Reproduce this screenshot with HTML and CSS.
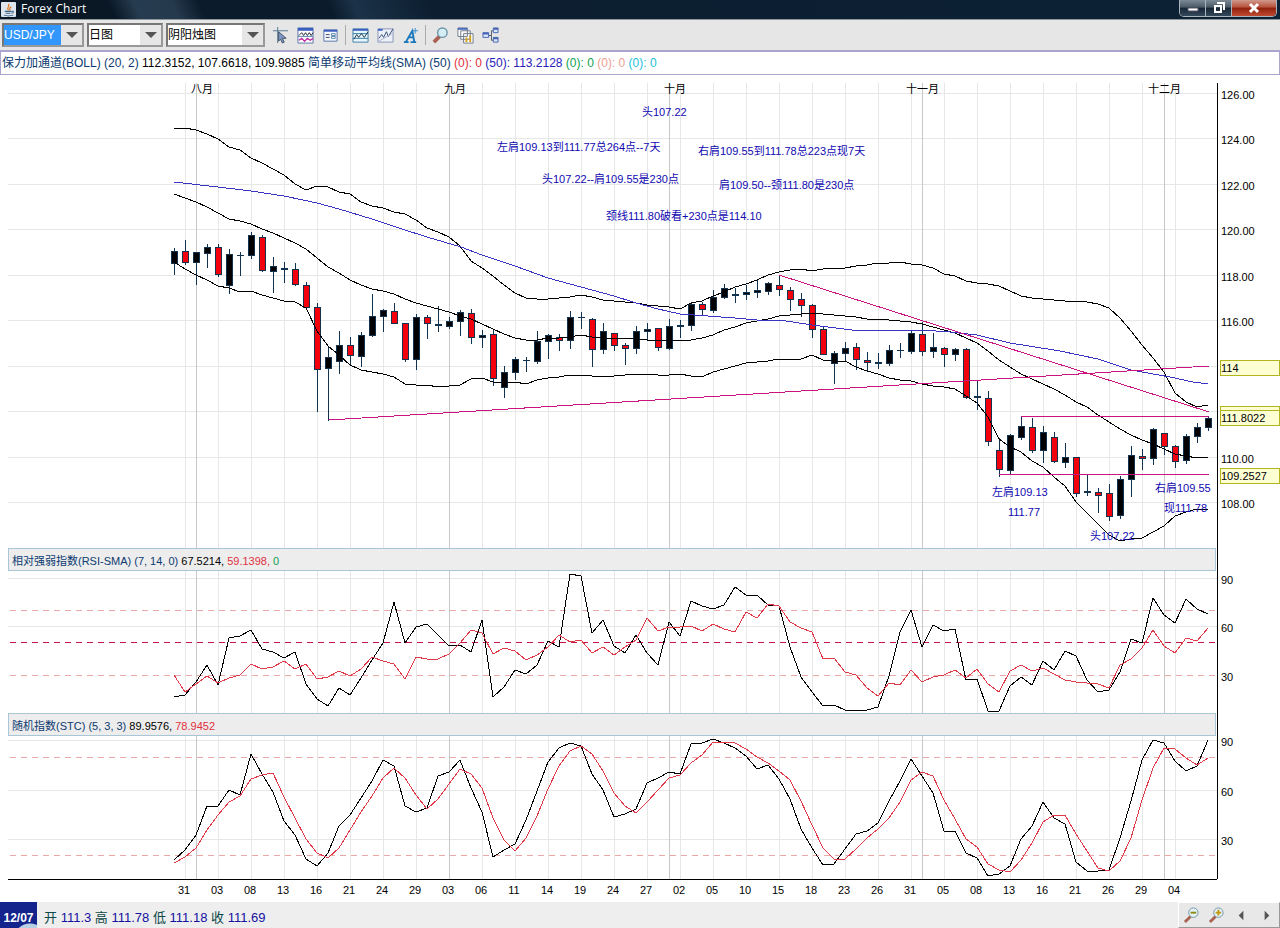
FILE: index.html
```html
<!DOCTYPE html>
<html lang="zh-CN">
<head>
    <meta charset="UTF-8">
    <meta name="viewport" content="width=device-width, initial-scale=1.0">
    <title>Forex Chart</title>
    <link rel="stylesheet" href="styles.css">
</head>
<body>

<header class="titlebar">
    <svg class="logo" viewBox="0 0 16 16">
        <rect width="16" height="16" rx="1" fill="#dfe7ee"/>
        <path d="M8 9C5 6 10 5 8 2M10 9C8 7 10 6 11 5" fill="none" stroke="#e07818" stroke-width="1.3"/>
        <path d="M4 10h7M5 12h5M3 14c3 1 7 1 10 0M11 10c3-1 3 2 0 2" fill="none" stroke="#3d6488" stroke-width="1.1"/>
    </svg>
    <h1>Forex Chart</h1>
    <div class="window-buttons">
        <button class="win" aria-label="最小化"><svg viewBox="0 0 12 12"><path d="M1 6h10v3H1z" fill="#fff" stroke="#556"/></svg></button>
        <button class="win" aria-label="还原"><svg viewBox="0 0 12 12"><path d="M4 1h7v7M2 4h6v6H2z" fill="none" stroke="#fff" stroke-width="2"/></svg></button>
        <button class="win close" aria-label="关闭"><svg viewBox="0 0 12 12"><path d="M2 2l8 8M10 2l-8 8" stroke="#fff" stroke-width="3"/></svg></button>
    </div>
</header>

<nav class="toolbar">
    <span class="combo pair">
        <select aria-label="货币对"><option>USD/JPY</option><option>EUR/USD</option></select>
    </span>
    <span class="combo period">
        <select aria-label="周期"><option>日图</option><option>周图</option></select>
    </span>
    <span class="combo style">
        <select aria-label="图表类型"><option>阴阳烛图</option><option>线图</option></select>
    </span>
    <button class="tool" aria-label="光标"><svg viewBox="0 0 18 18"><path d="M1 4h16M6 0v17" stroke="#52778f"/><path d="M7 5l8 7-4 0 2 4-2 1-2-4-2 2z" fill="#7d95c4" stroke="#456"/></svg></button>
    <button class="tool" aria-label="指标"><svg viewBox="0 0 18 18"><path d="M1 1h16v16H1z" fill="#fff" stroke="#5873a8"/><path d="M1 1h16v3H1z" fill="#3b5fc0"/><path d="M2 9l3-3 2 3 2-3 2 3 2-3 2 3 2-3" fill="none" stroke="#223"/><path d="M1 10h16" stroke="#58a"/><path d="M2 14l3-2 3 3 3-3 3 2 3-2" fill="none" stroke="#c42aa0" stroke-width="1.5"/></svg></button>
    <button class="tool" aria-label="数据"><svg viewBox="0 0 18 18"><path d="M2 3h14v12H2z" fill="#f4f6fc" stroke="#5873a8"/><path d="M2 3h14v2H2z" fill="#3b5fc0"/><path d="M4 8h4M4 11h4" stroke="#346"/><path d="M10 7h4v2h-4zM10 10h4v2h-4z" fill="#fff" stroke="#58a"/></svg></button>
    <span class="separator"></span>
    <button class="tool" aria-label="趋势线"><svg viewBox="0 0 18 18"><path d="M1 2h16v14H1z" fill="#e8f5fb" stroke="#3f7fa8"/><path d="M1 2h16v2H1z" fill="#3b5fc0"/><path d="M1 7h16M1 12h16" stroke="#2a7d9c"/><path d="M2 13l3-5 2 3 3-4 3 4 4-6" fill="none" stroke="#234"/></svg></button>
    <button class="tool" aria-label="折线"><svg viewBox="0 0 18 18"><path d="M1 2h16v14H1z" fill="#edf0f7" stroke="#8794b8"/><path d="M1 2h5v2H1z" fill="#4067c8"/><path d="M2 12l3-4 2 3 3-6 2 5 5-8" fill="none" stroke="#334a7c"/><path d="M2 15L16 7" stroke="#aab3cc"/></svg></button>
    <button class="tool" aria-label="文字"><svg viewBox="0 0 18 18"><path d="M2 16h5M9 16h6M4 16L11 4l2 12M6 11h6" fill="none" stroke="#1978bd" stroke-width="2"/><path d="M14 1v6M11 4h6" stroke="#3a91cc"/></svg></button>
    <span class="separator"></span>
    <button class="tool" aria-label="放大"><svg viewBox="0 0 18 18"><path d="M2 16l6-6" stroke="#a96250" stroke-width="4"/><circle cx="11" cy="6" r="5" fill="#d5eef5" stroke="#6c95a8" stroke-width="1.5"/></svg></button>
    <button class="tool" aria-label="新窗口"><svg viewBox="0 0 18 18"><path d="M1 1h10v9H1zM4 4h10v9H4zM7 7h10v10H7z" fill="#fff" stroke="#6d7888"/><path d="M1 1h10v2H1z" fill="#4a6fc0"/><path d="M10 11v5M14 9v7" stroke="#d3a11c" stroke-width="2"/></svg></button>
    <button class="tool" aria-label="连接"><svg viewBox="0 0 18 18"><path d="M7 9h3V4h2M10 9v5h2" fill="none" stroke="#456"/><path d="M1 6h6v5H1zM12 1h5v5h-5zM12 11h5v5h-5z" fill="#dce6fb" stroke="#4664b4"/><path d="M1 6h6v2H1zM12 1h5v2h-5zM12 11h5v2h-5z" fill="#4664b4"/></svg></button>
</nav>

<div class="legend">
    保力加通道(BOLL) (20, 2) <b>112.3152, 107.6618, 109.9885</b> 简单移动平均线(SMA) (50)
    <span class="red">(0): 0</span> <span class="blue">(50): 113.2128</span> <span class="green">(0): 0</span>
    <span class="salmon">(0): 0</span> <span class="cyan">(0): 0</span>
</div>

<main>
    <svg class="pane" id="price" viewBox="0 75 1280 473"></svg>
    <div class="pane-head">
        <h2>相对强弱指数(RSI-SMA) (7, 14, 0) <b>67.5214,</b> <span class="red">59.1398,</span> <span class="green">0</span></h2>
        <i></i>
    </div>
    <svg class="pane" id="rsi" viewBox="0 571 1280 142"></svg>
    <div class="pane-head">
        <h2>随机指数(STC) (5, 3, 3) <b>89.9576,</b> <span class="red">78.9452</span></h2>
        <i></i>
    </div>
    <svg class="pane" id="stc" viewBox="0 736 1280 166"></svg>
</main>

<footer class="statusbar">
    <span class="date">12/07</span>
    <p>开 <b>111.3</b> 高 <b>111.78</b> 低 <b>111.18</b> 收 <b>111.69</b></p>
    <div class="nav">
        <button class="tool" aria-label="缩小"><svg viewBox="0 0 18 18"><path d="M2 16l6-6" stroke="#a96250" stroke-width="3"/><circle cx="11" cy="6" r="5" fill="#e3f1f4" stroke="#7394a8"/><path d="M8 6h6" stroke="#8a8a10" stroke-width="2"/></svg></button>
        <button class="tool" aria-label="放大"><svg viewBox="0 0 18 18"><path d="M2 16l6-6" stroke="#a96250" stroke-width="3"/><circle cx="11" cy="6" r="5" fill="#e3f1f4" stroke="#7394a8"/><path d="M8 6h6M11 3v6" stroke="#c29a10" stroke-width="2"/></svg></button>
        <button class="tool" aria-label="向左"><svg viewBox="0 0 18 18"><path d="M11 4v10L6 9z" fill="#555"/></svg></button>
        <button class="tool" aria-label="向右"><svg viewBox="0 0 18 18"><path d="M7 4v10l5-5z" fill="#555"/></svg></button>
    </div>
</footer>

<script src="chart.js"></script>
</body>
</html>
```
FILE: styles.css
```css
* {
    box-sizing: border-box;
}

body {
    margin: 0;
    background: #fff;
    font-family: "Liberation Sans", "Noto Sans CJK SC", sans-serif;
    font-size: 12px;
    color: #000;
}

h1, h2, p {
    margin: 0;
    font-weight: normal;
}

b {
    font-weight: normal;
    color: #000;
}

button {
    padding: 0;
    border: 0;
    background: none;
}

/* title bar */
.titlebar {
    display: flex;
    align-items: flex-start;
    height: 20px;
    padding-left: 1px;
    border-bottom: 1px solid #8d979c;
    background: linear-gradient(65deg, #0a1826 9%, #263c50 11%, #25394c 14%, #0b1b2c 16%, #0b1b2c 26%, #1b3248 28%, #0c1e30 34%, #0d2236 100%);
}

.logo {
    width: 15px;
    height: 15px;
    margin-top: 2px;
}

.titlebar h1 {
    flex: 1;
    margin-left: 5px;
    font: 12px/18px "Open Sans", "Noto Sans", sans-serif;
    color: #fff;
}

.window-buttons {
    display: flex;
    height: 17px;
    margin-right: 3px;
    border: 1px solid #a9b3bb;
    border-top: 0;
    border-radius: 0 0 5px 5px;
    overflow: hidden;
}

.win {
    display: flex;
    align-items: center;
    justify-content: center;
    width: 26px;
    border-right: 1px solid #a9b3bb;
    background: linear-gradient(#7c8a97, #4a5966 45%, #152536 50%, #35495c);
}

.win svg {
    width: 12px;
    height: 12px;
}

.win.close {
    width: 44px;
    border-right: 0;
    background: linear-gradient(#d09a8c, #b8503c 45%, #90200c 50%, #c04a30);
}

/* toolbar */
.toolbar {
    display: flex;
    align-items: center;
    height: 30px;
    padding-left: 2px;
    background: #e6e6e6;
}

.combo {
    position: relative;
    height: 24px;
    margin-right: 3px;
    border: 2px solid #777;
    border-right-color: #999;
    border-bottom-color: #999;
    background: #fff;
}

.combo::after {
    content: "";
    position: absolute;
    top: 7px;
    right: 4px;
    border: 6px solid transparent;
    border-top-color: #555;
    border-bottom: 0;
    pointer-events: none;
}

.combo select {
    display: block;
    width: 100%;
    height: 20px;
    padding: 0;
    border: 0;
    border-radius: 0;
    appearance: none;
    background: linear-gradient(to left, #e6e6e6 21px, #fff 21px);
    font: inherit;
    color: #000;
}

.pair {
    width: 82px;
}

.pair select {
    background: linear-gradient(to left, #e6e6e6 21px, #3197fd 21px);
    color: #fff;
}

.period {
    width: 76px;
}

.style {
    width: 99px;
}

.tool {
    display: flex;
    align-items: center;
    justify-content: center;
    width: 25px;
    height: 24px;
}

.tool svg {
    width: 17px;
    height: 17px;
}

.separator {
    width: 1px;
    height: 20px;
    margin: 0 2px;
    background: #aaa;
}

/* indicator values */
.legend {
    height: 25px;
    padding-left: 1px;
    border: 1px solid #aaa5cd;
    border-top-width: 2px;
    line-height: 22px;
    color: #0c3a70;
}

.red {
    color: #e03040;
}

.blue {
    color: #2a22b8;
}

.green {
    color: #10a050;
}

.salmon {
    color: #eda090;
}

.cyan {
    color: #20c0d8;
}

/* chart panes */
.pane {
    display: block;
    width: 100%;
    font-size: 11px;
}

.pane line, .pane polyline, .pane rect {
    fill: none;
    stroke-width: 1;
    shape-rendering: crispEdges;
}

.pane .grid {
    stroke: #e6e8e8;
}

.pane .month {
    stroke: #c8c8c8;
}

.pane .level {
    stroke: #e8a8a8;
    stroke-dasharray: 6 5;
}

.pane .middle {
    stroke: #c8144c;
    stroke-dasharray: 6 5;
}

.pane .axis, .pane .line {
    stroke: #000;
}

.pane .sma {
    stroke: #3a34c4;
}

.pane .signal {
    stroke: #e03a48;
}

.pane .trend {
    stroke: #cc1480;
}

.pane .wick, .pane .body {
    fill: #123350;
}

.pane .up {
    fill: #000;
}

.pane .down {
    fill: #f4000c;
}

.pane .note {
    fill: #1008b0;
}

.pane .tag {
    fill: #ffffd4;
    stroke: #b4b41c;
}

.pane .center {
    text-anchor: middle;
}

.pane-head {
    display: grid;
    grid-template-columns: 1217fr 63fr;
    height: 23px;
}

.pane-head h2 {
    height: 23px;
    margin: 0 1px 0 8px;
    padding-left: 3px;
    border: 1px solid #a9c6d6;
    background: #ededed;
    font-size: 11px;
    line-height: 24px;
    color: #0c3a70;
}

.pane-head i {
    height: 23px;
    border-left: 1px solid #000;
}

/* status bar */
.statusbar {
    display: flex;
    height: 26px;
    background: #eee;
}

.date {
    width: 37px;
    background: radial-gradient(circle at 30px 38px, #b8d0e4 16px, #14248c 17px);
    font-weight: bold;
    line-height: 32px;
    text-align: center;
    color: #fff;
}

.statusbar p {
    flex: 1;
    padding-left: 7px;
    font-size: 13px;
    line-height: 32px;
    color: #0c4848;
}

.statusbar b {
    color: #1410a0;
}

.nav {
    display: flex;
    border: 1px solid #fff;
    border-right-color: #999;
    border-bottom-color: #999;
    background: #e8e8e8;
}
```
FILE: chart.js
```js
const NS = "http://www.w3.org/2000/svg";
const FIRST_X = 174;
const STEP = 11;

function add(pane, tag, attrs, text) {
    const el = document.createElementNS(NS, tag);
    for (const key in attrs) el.setAttribute(key, attrs[key]);
    if (text) el.textContent = text;
    document.getElementById(pane).appendChild(el);
}

function line(pane, cls, x1, y1, x2, y2) {
    add(pane, "line", { class: cls, x1, y1, x2, y2 });
}

function label(pane, cls, x, y, text) {
    add(pane, "text", { class: cls, x, y }, text);
}

// one value for each trading day
function series(pane, cls, values) {
    const points = values.map((y, i) => (FIRST_X + i * STEP) + "," + y).join(" ");
    add(pane, "polyline", { class: cls, points });
}

const panes = {
    price: { top: 83, bottom: 548, rows: [93, 138, 184, 229, 275, 320, 366, 411, 457, 502] },
    rsi: { top: 571, bottom: 713, rows: [578, 626] },
    stc: { top: 736, bottom: 879, rows: [740, 790, 839] }
};

// grid
for (const id in panes) {
    const p = panes[id];
    p.rows.forEach(y => line(id, "grid", 8, y, 1217, y));
    for (let x = 185; x < 1200; x += 33) line(id, "grid", x, p.top, x, p.bottom);
    [196, 449, 669, 922, 1164].forEach(x => line(id, "month", x, p.top, x, p.bottom));
}

[["rsi", "level", 610], ["rsi", "middle", 642], ["rsi", "level", 675],
 ["stc", "level", 757], ["stc", "level", 855]].forEach(([id, cls, y]) => line(id, cls, 10, y, 1217, y));

// wick top, body top, body bottom, wick bottom, 1 for a rising day
const candles = [
    [248, 251, 263, 275, 1], [240, 251, 262, 265, 0], [252, 252, 262, 285, 1], [244, 247, 253, 268, 1],
    [244, 247, 274, 277, 0], [249, 254, 285, 294, 1], [252, 255, 255, 276, 1], [232, 235, 255, 259, 1],
    [235, 237, 270, 272, 0], [257, 266, 271, 293, 1], [262, 268, 269, 283, 1], [263, 269, 284, 286, 0],
    [282, 285, 307, 309, 0], [303, 307, 369, 412, 0], [346, 357, 368, 421, 1], [331, 345, 361, 374, 1],
    [337, 345, 355, 365, 0], [332, 335, 356, 367, 1], [294, 316, 335, 337, 1], [309, 310, 316, 332, 1],
    [303, 311, 323, 324, 0], [323, 323, 359, 362, 0], [314, 317, 359, 370, 1], [315, 317, 323, 339, 0],
    [306, 324, 325, 332, 1], [317, 321, 326, 329, 1], [310, 312, 321, 336, 1], [309, 313, 337, 344, 0],
    [330, 335, 337, 348, 1], [329, 334, 378, 386, 0], [366, 372, 387, 398, 1], [357, 359, 372, 380, 1],
    [357, 360, 360, 372, 1], [331, 341, 361, 364, 1], [334, 335, 341, 359, 1], [334, 337, 340, 351, 0],
    [311, 317, 340, 349, 1], [312, 317, 317, 329, 1], [318, 319, 349, 367, 0], [323, 331, 349, 354, 1],
    [333, 333, 345, 351, 0], [343, 345, 348, 365, 0], [326, 331, 348, 354, 1], [323, 329, 331, 341, 1],
    [328, 328, 347, 351, 0], [319, 326, 348, 350, 1], [320, 325, 326, 338, 1], [303, 304, 325, 331, 1],
    [302, 304, 309, 315, 0], [290, 297, 310, 313, 1], [284, 288, 297, 299, 1], [288, 294, 295, 303, 1],
    [285, 292, 294, 300, 1], [280, 290, 292, 298, 1], [282, 283, 291, 295, 1], [275, 285, 289, 296, 0],
    [287, 290, 299, 311, 0], [293, 299, 305, 317, 0], [304, 305, 329, 338, 0], [326, 329, 354, 355, 0],
    [351, 353, 363, 384, 1], [342, 348, 353, 361, 1], [343, 347, 359, 370, 0], [352, 360, 362, 371, 0],
    [353, 362, 363, 369, 1], [345, 350, 363, 366, 1], [343, 350, 350, 358, 1], [331, 333, 351, 354, 1],
    [322, 334, 351, 356, 0], [333, 347, 351, 358, 1], [347, 348, 354, 367, 0], [348, 349, 354, 361, 1],
    [348, 349, 397, 399, 0], [381, 396, 397, 410, 1], [391, 398, 441, 446, 0], [438, 450, 469, 477, 0],
    [434, 435, 470, 474, 1], [416, 426, 437, 440, 1], [418, 427, 450, 453, 0], [426, 432, 450, 463, 1],
    [432, 437, 461, 463, 0], [443, 457, 462, 468, 1], [457, 457, 493, 497, 0], [475, 491, 492, 496, 1],
    [488, 492, 495, 513, 0], [484, 493, 516, 521, 0], [476, 479, 515, 519, 1], [446, 455, 479, 497, 1],
    [449, 456, 458, 470, 0], [428, 429, 458, 465, 1], [433, 433, 446, 455, 0], [445, 446, 461, 468, 0],
    [434, 436, 460, 464, 1], [423, 427, 436, 443, 1], [417, 418, 427, 431, 1]
];

candles.forEach(([high, top, bottom, low, up], i) => {
    const x = FIRST_X + i * STEP;
    const h = bottom - top + 1;
    add("price", "rect", { class: "wick", x: x, y: high, width: 1, height: low - high });
    add("price", "rect", { class: "body", x: x - 3, y: top, width: 7, height: h });
    if (h > 2) add("price", "rect", { class: up ? "up" : "down", x: x - 2, y: top + 1, width: 5, height: h - 2 });
});

// bollinger bands
series("price", "line", [
    129, 128, 130, 134, 139, 147, 150, 158, 163, 169, 175, 184, 190, 186, 187, 192, 194, 202, 206, 208,
    212, 214, 220, 228, 232, 237, 246, 261, 268, 276, 285, 293, 298, 299, 299, 298, 297, 295, 297, 300,
    301, 302, 303, 305, 306, 307, 309, 303, 301, 296, 292, 287, 284, 280, 275, 272, 270, 269, 271, 269,
    268, 268, 266, 265, 263, 263, 262, 264, 265, 268, 274, 276, 281, 283, 284, 286, 291, 296, 298, 299,
    300, 301, 301, 302, 304, 308, 318, 331, 345, 358, 372, 393, 402, 407, 405]);
series("price", "line", [
    194, 198, 202, 207, 213, 219, 221, 224, 229, 233, 238, 243, 249, 258, 267, 273, 280, 285, 289, 291,
    294, 299, 303, 306, 309, 312, 316, 319, 324, 329, 334, 338, 340, 340, 338, 338, 337, 335, 337, 338,
    339, 338, 339, 340, 340, 340, 341, 340, 338, 335, 330, 327, 323, 321, 319, 316, 315, 314, 313, 314,
    315, 316, 317, 319, 319, 320, 321, 322, 324, 327, 330, 333, 338, 343, 351, 360, 367, 374, 379, 384,
    389, 395, 402, 407, 415, 422, 429, 435, 440, 444, 449, 454, 456, 458, 457]);
series("price", "line", [
    262, 269, 275, 280, 286, 288, 292, 291, 295, 298, 301, 302, 308, 331, 346, 355, 365, 370, 372, 374,
    377, 384, 385, 385, 387, 386, 385, 379, 378, 382, 383, 382, 384, 380, 378, 377, 375, 375, 376, 376,
    376, 375, 374, 374, 375, 375, 374, 376, 377, 372, 369, 366, 363, 362, 361, 359, 359, 359, 355, 360,
    361, 361, 367, 371, 374, 378, 380, 381, 384, 386, 387, 389, 396, 403, 417, 439, 447, 452, 461, 467,
    477, 486, 502, 513, 524, 535, 541, 539, 538, 532, 526, 516, 512, 509, 510]);

add("price", "polyline", {
    class: "sma",
    points: "174,182 218,187 251,191 284,196 317,203 339,209 372,219 405,230 427,237 461,247 482,255 515,266 548,278 581,287 614,296 636,303 658,309 680,314 735,318 757,320 780,320 812,325 852,330 922,330 950,332 977,335 1010,343 1060,351 1098,359 1131,370 1170,377 1193,382 1208,384"
});

// trend lines
line("price", "trend", 329, 420, 1209, 366);
line("price", "trend", 779, 275, 1209, 412);
line("price", "trend", 1021, 416, 1209, 416);
line("price", "trend", 999, 474, 1209, 474);

[[191, "八月"], [444, "九月"], [664, "十月"], [906, "十一月"], [1148, "十二月"]]
    .forEach(([x, text]) => label("price", "", x, 93, text));

[[642, 116, "头107.22"],
 [497, 151, "左肩109.13到111.77总264点--7天"],
 [698, 155, "右肩109.55到111.78总223点现7天"],
 [542, 183, "头107.22--肩109.55是230点"],
 [719, 189, "肩109.50--颈111.80是230点"],
 [606, 220, "颈线111.80破看+230点是114.10"],
 [992, 496, "左肩109.13"],
 [1008, 516, "111.77"],
 [1155, 492, "右肩109.55"],
 [1164, 512, "现111.78"],
 [1090, 540, "头107.22"]].forEach(([x, y, text]) => label("price", "note", x, y, text));

// RSI
series("rsi", "line", [
    697, 695, 682, 665, 685, 638, 636, 630, 649, 652, 658, 652, 684, 699, 706, 688, 695, 678, 660, 643,
    602, 643, 627, 624, 635, 646, 645, 652, 620, 697, 687, 670, 674, 665, 641, 647, 574, 576, 633, 620,
    646, 653, 635, 653, 665, 622, 636, 601, 606, 609, 605, 587, 595, 595, 605, 606, 647, 677, 692, 706,
    705, 710, 711, 710, 707, 676, 632, 610, 647, 625, 631, 629, 680, 679, 711, 711, 686, 677, 685, 661,
    670, 651, 656, 680, 692, 690, 672, 639, 643, 598, 615, 623, 599, 609, 614]);
series("rsi", "signal", [
    675, 692, 684, 676, 683, 678, 675, 664, 669, 667, 661, 669, 664, 679, 677, 671, 676, 669, 657, 661,
    664, 679, 657, 659, 659, 654, 643, 630, 633, 654, 648, 651, 660, 655, 647, 635, 642, 640, 653, 647,
    655, 647, 640, 618, 631, 627, 627, 626, 631, 624, 629, 632, 612, 618, 604, 606, 622, 628, 632, 659,
    658, 672, 675, 688, 696, 683, 685, 670, 682, 677, 675, 670, 678, 669, 684, 692, 671, 665, 671, 668,
    674, 680, 682, 683, 684, 688, 665, 659, 648, 630, 646, 653, 638, 641, 628]);

// stochastic
series("stc", "line", [
    860, 850, 835, 806, 806, 790, 795, 754, 774, 792, 821, 835, 859, 866, 853, 826, 815, 798, 781, 760,
    766, 806, 812, 808, 776, 772, 760, 788, 812, 857, 850, 844, 820, 791, 762, 748, 743, 746, 774, 790,
    817, 814, 809, 783, 778, 772, 774, 744, 743, 739, 743, 748, 756, 769, 765, 779, 799, 829, 848, 865,
    864, 849, 834, 831, 823, 801, 781, 759, 776, 793, 831, 831, 853, 858, 876, 874, 866, 839, 826, 802,
    818, 824, 862, 871, 871, 870, 838, 801, 760, 740, 743, 761, 771, 766, 740]);
series("stc", "signal", [
    863, 857, 848, 830, 815, 802, 796, 779, 775, 773, 797, 818, 839, 853, 858, 848, 830, 812, 796, 778,
    768, 778, 795, 809, 799, 784, 769, 774, 788, 818, 840, 851, 838, 816, 789, 766, 751, 746, 754, 771,
    793, 806, 813, 802, 790, 778, 775, 763, 755, 742, 742, 743, 749, 757, 763, 771, 780, 801, 825, 848,
    859, 859, 849, 838, 829, 818, 802, 780, 772, 776, 800, 819, 839, 847, 864, 870, 872, 860, 843, 822,
    815, 815, 834, 851, 868, 871, 861, 838, 800, 768, 748, 749, 758, 765, 758]);

// axes
for (const id in panes) line(id, "axis", 1217, panes[id].top, 1217, panes[id].bottom);
line("stc", "axis", 8, 879, 1217, 879);

[[126, 99], [124, 144], [122, 190], [120, 235], [118, 281], [116, 326], [110, 463], [108, 508]]
    .forEach(([value, y]) => label("price", "", 1221, y, value.toFixed(2)));

[[406, ""], [360, "114"], [410, "111.8022"], [468, "109.2527"]].forEach(([y, text]) => {
    add("price", "rect", { class: "tag", x: 1220, y: y, width: 59, height: 15 });
    label("price", "", 1221, y + 12, text);
});

[["rsi", 584, 90], ["rsi", 632, 60], ["rsi", 681, 30], ["stc", 746, 90], ["stc", 796, 60], ["stc", 845, 30]]
    .forEach(([id, y, value]) => label(id, "", 1221, y, value));

const days = "31 03 08 13 16 21 24 29 03 06 11 14 19 24 27 02 05 10 15 18 23 26 31 05 08 13 16 21 26 29 04".split(" ");
days.forEach((day, i) => label("stc", "center", 184 + i * 33, 894, day));
```
